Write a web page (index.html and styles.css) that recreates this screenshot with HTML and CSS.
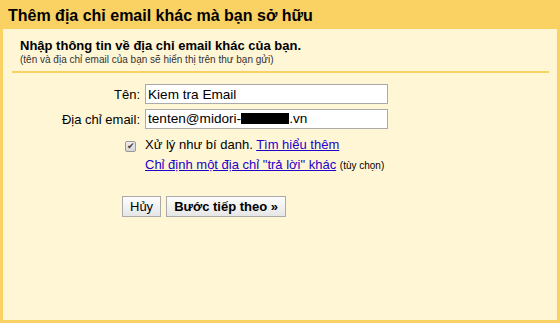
FILE: index.html
```html
<!DOCTYPE html>
<html lang="vi">
<head>
  <meta charset="UTF-8" />
  <title>Thêm địa chỉ email khác</title>
  <link rel="stylesheet" href="styles.css">
</head>
<body>
  <div class="dialog">
    <div class="dialog-title">Thêm địa chỉ email khác mà bạn sở hữu</div>

    <div class="dialog-body">
      <div class="intro">
        <div class="intro-head">Nhập thông tin về địa chỉ email khác của bạn.</div>
        <div class="intro-note">(tên và địa chỉ email của bạn sẽ hiển thị trên thư bạn gửi)</div>
      </div>

      <div class="form">
        <div class="row">
          <label class="row-label" for="nameField">Tên:</label>
          <input class="field" id="nameField" type="text" value="Kiem tra Email" />
        </div>
        <div class="row">
          <label class="row-label">Địa chỉ email:</label>
          <div class="field">tenten@midori-<span class="redact"></span>.vn</div>
        </div>
        <div class="row row-tight">
          <span class="row-label"><span class="check">&#10004;</span></span>
          <span>Xử lý như bí danh. <a href="#">Tìm hiểu thêm</a></span>
        </div>
        <div class="row row-tight">
          <span class="row-label"></span>
          <span><a href="#">Chỉ định một địa chỉ "trả lời" khác</a> <small>(tùy chọn)</small></span>
        </div>
      </div>

      <div class="actions">
        <button class="btn">Hủy</button>
        <button class="btn btn-main">Bước tiếp theo »</button>
      </div>
    </div>
  </div>
</body>
</html>
```

FILE: styles.css
```css
html, body {
  margin: 0;
  height: 100%;
}

body {
  font-family: "Liberation Sans", Arial, sans-serif;
  background: #FAD163;
  color: #000;
}

.dialog {
  height: 100%;
  display: flex;
  flex-direction: column;
  padding: 0 3px 3px;
  box-sizing: border-box;
}

.dialog-title {
  height: 29px;
  line-height: 31px;
  padding-left: 5px;
  font-size: 16px;
  font-weight: bold;
}

.dialog-body {
  flex: 1;
  background: #FFF6D6;
  padding: 0 8px 0 9px;
}

.intro {
  padding: 9px 0 0 8px;
  height: 33px;
  border-bottom: 2px solid #FAD163;
}

.intro-head {
  font-size: 13px;
  font-weight: bold;
  line-height: 16px;
}

.intro-note {
  font-size: 10px;
  line-height: 11px;
  color: #333;
}

.form {
  padding-top: 11px;
}

.row {
  display: flex;
  align-items: center;
  height: 20px;
  font-size: 13px;
  margin-bottom: 5px;
}

.row-tight {
  margin-bottom: 0;
}

.row-label {
  width: 133px;
  padding-right: 5px;
  text-align: right;
  box-sizing: border-box;
  flex-shrink: 0;
}

.field {
  width: 243px;
  height: 20px;
  box-sizing: border-box;
  border: 1px solid #aaa;
  background: #fff;
  font: inherit;
  font-size: 13.6px;
  padding: 0 2px;
  margin: 0;
  line-height: 18px;
}

.redact {
  display: inline-block;
  width: 48px;
  height: 11px;
  background: #000;
  vertical-align: -1px;
}

.check {
  display: inline-block;
  width: 9px;
  height: 9px;
  border: 1px solid #999;
  border-radius: 2px;
  background: linear-gradient(#eee, #d6d6d6);
  color: #444;
  font-size: 9px;
  line-height: 9px;
  text-align: center;
  margin-right: 4px;
  vertical-align: -1px;
}

.row a {
  color: #2200CC;
  text-decoration: underline;
}

.row small {
  font-size: 10px;
}

.actions {
  padding: 22px 0 0 110px;
  display: flex;
  gap: 5px;
}

.btn {
  font-family: inherit;
  font-size: 13px;
  height: 21px;
  padding: 0 7px;
  border: 1px solid #aaa;
  border-radius: 0;
  background: linear-gradient(#fdfdfd, #e6e6e6);
  color: #000;
}

.btn-main {
  font-weight: bold;
}
```
